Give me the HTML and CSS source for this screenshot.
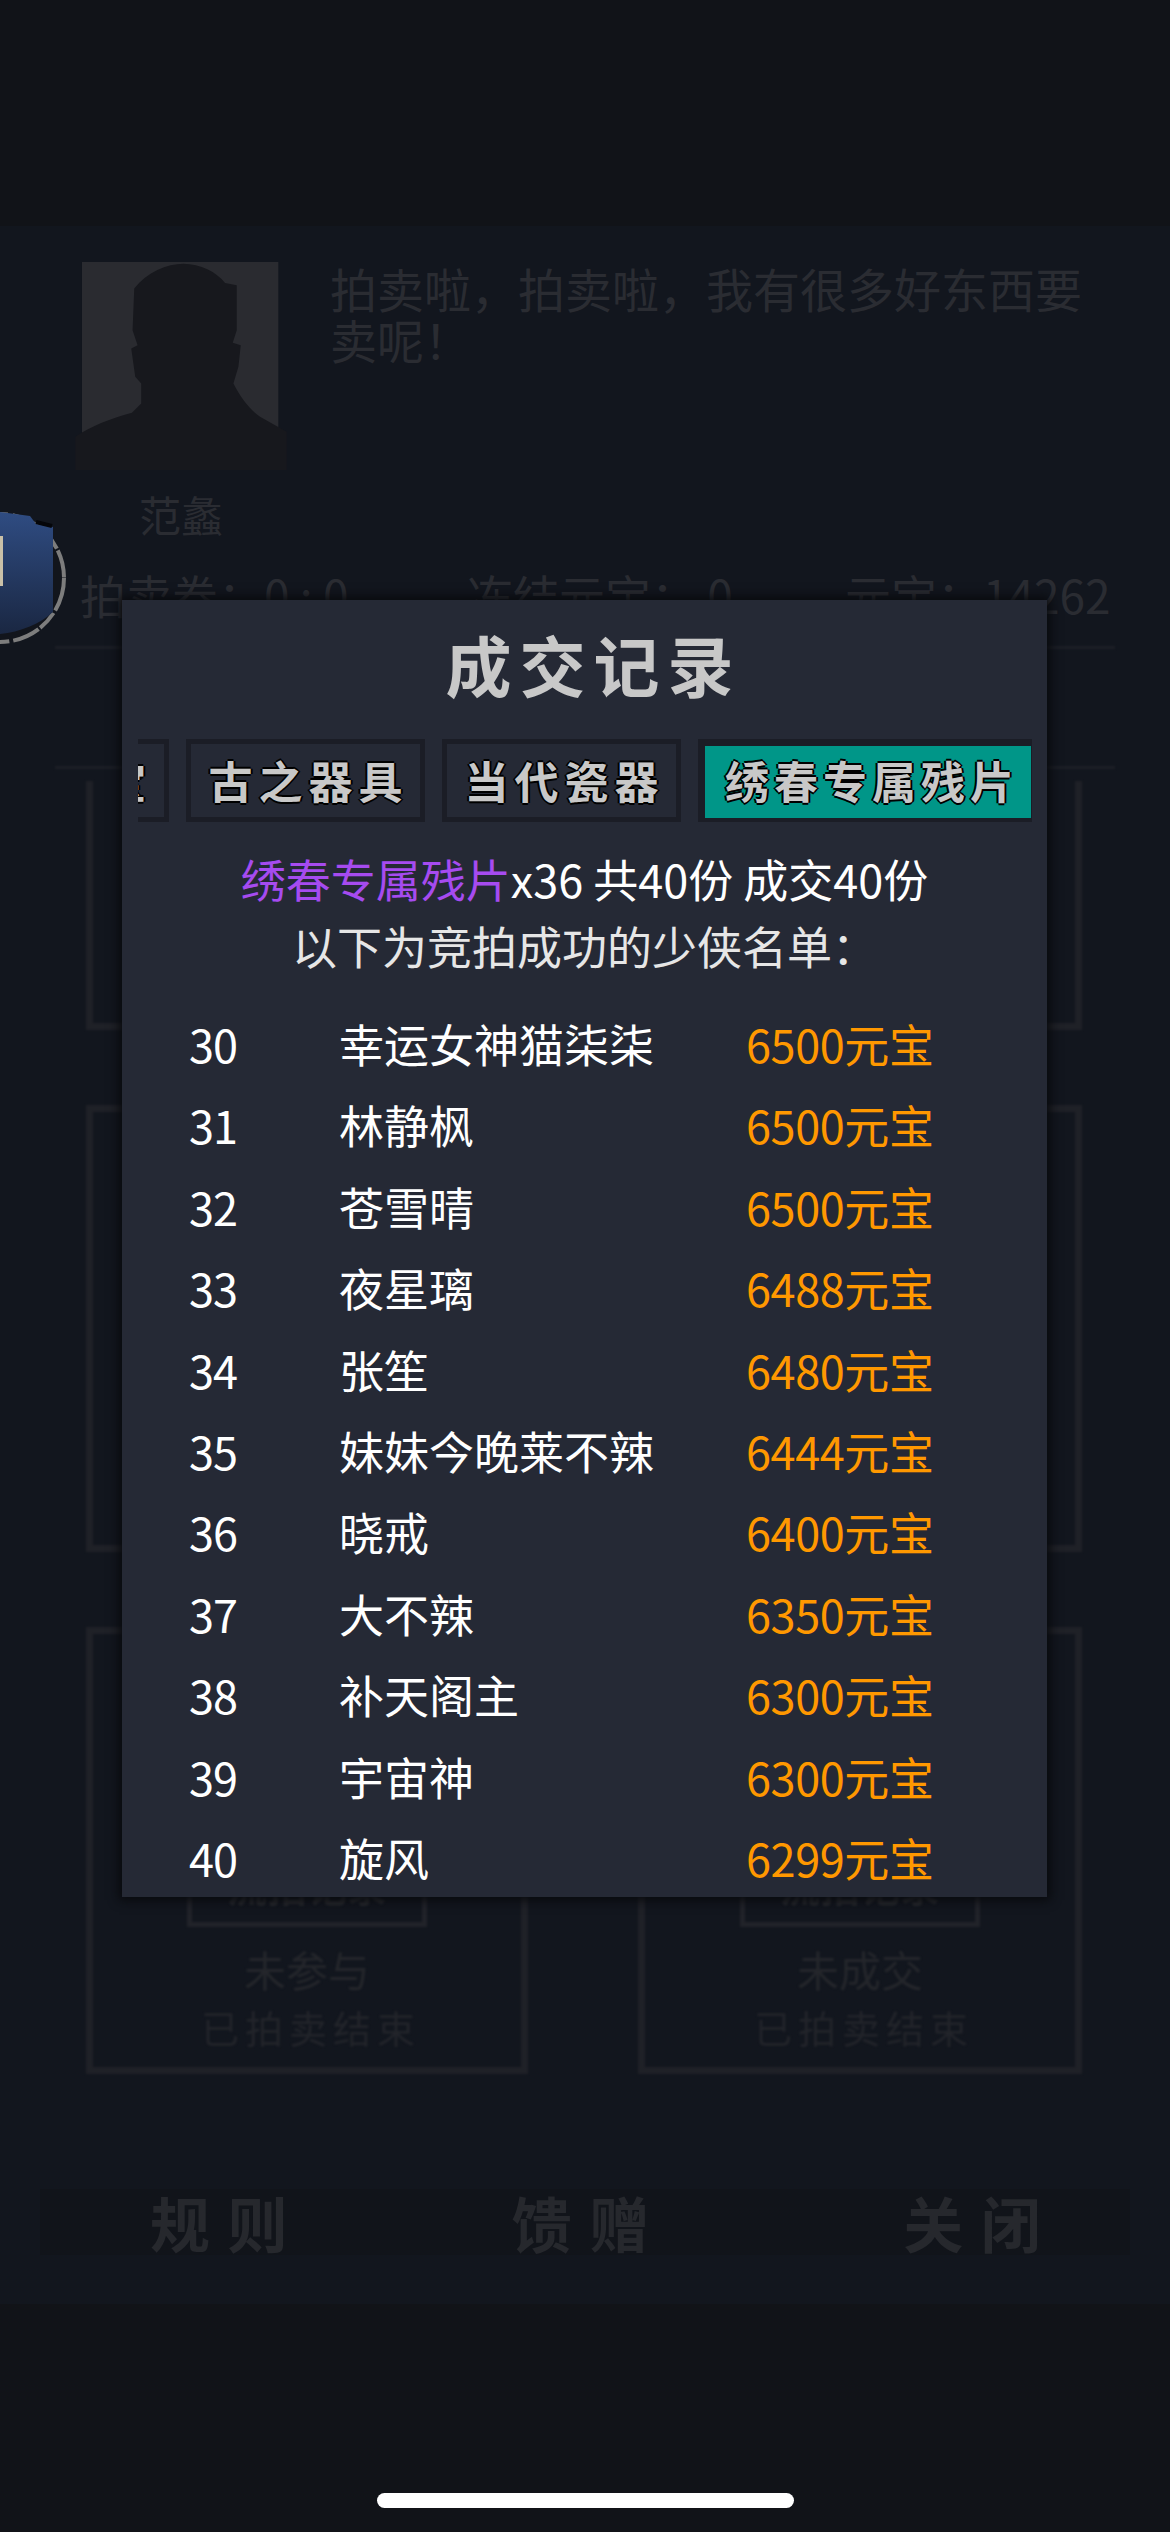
FILE: index.html
```html
<!DOCTYPE html>
<html lang="zh-CN">
<head>
    <meta charset="UTF-8">
    <meta name="viewport" content="width=device-width, initial-scale=1.0">
    <title>成交记录</title>
    <link rel="stylesheet" href="styles.css">
</head>
<body>
<div class="screen">
    <div class="top-space"></div>

    <div class="auction">
        <div class="npc">
            <div class="npc-left">
                <svg class="avatar" viewBox="45 95 635 625">
                    <rect x="65" y="95" width="590" height="520" fill="#2a2b30"/>
                    <path fill="#17181d" d="M45 620C90 590 150 565 215 548L243 520 243 460 225 440 213 355 232 345 217 300 222 175C260 125 320 100 370 100 420 100 470 125 495 158L530 165 530 300 518 338 542 345 535 410 520 460C540 500 570 540 600 560L680 605 680 720 45 720Z"/>
                </svg>
                <div class="npc-name">范蠡</div>
            </div>
            <div class="npc-say">拍卖啦，拍卖啦，我有很多好东西要卖呢！</div>
        </div>

        <div class="stats">
            <span class="stat-ticket">拍卖券：0 : 0</span>
            <span class="stat-frozen">冻结元宝： 0</span>
            <span class="stat-gold">元宝：14262</span>
        </div>
        <div class="divider"></div>
        <div class="tab-space"></div>
        <div class="divider"></div>

        <div class="cards">
            <div class="card card-cut"></div>
            <div class="card card-cut"></div>
            <div class="card"></div>
            <div class="card"></div>
            <div class="card">
                <div class="record-btn">流拍记录</div>
                <div class="card-state">未参与</div>
                <div class="card-end">已拍卖结束</div>
            </div>
            <div class="card">
                <div class="record-btn">流拍记录</div>
                <div class="card-state">未成交</div>
                <div class="card-end">已拍卖结束</div>
            </div>
        </div>

        <div class="footer">
            <span class="foot-btn foot-rule">规 则</span>
            <span class="foot-btn foot-gift">馈 赠</span>
            <span class="foot-btn foot-close">关 闭</span>
        </div>
    </div>

    <div class="bottom-space">
        <div class="home-bar"></div>
    </div>

    <!-- 左侧的圆形徽章 -->
    <svg class="badge" viewBox="0 0 72 140">
        <defs>
            <linearGradient id="shield" x1="0" y1="0" x2="0" y2="1">
                <stop offset="0" stop-color="#2f4c82"/>
                <stop offset="1" stop-color="#1a2742"/>
            </linearGradient>
        </defs>
        <circle cx="0" cy="70" r="64" fill="#12151c"/>
        <circle cx="0" cy="70" r="64" fill="none" stroke="#7d7d7d" stroke-width="4" stroke-dasharray="34 3 20 2 28 4 40 3 18 5"/>
        <path d="M0 4L30 8 36 16 53 19 53 104C40 116 20 124 0 126Z" fill="url(#shield)"/>
        <path d="M36 14L52 18" stroke="#05060a" stroke-width="4"/>
        <rect x="0" y="28" width="3" height="50" fill="#c9c0a8"/>
    </svg>

    <!-- 成交记录弹窗 -->
    <div class="modal">
        <h1 class="modal-title">成交记录</h1>
        <div class="tabs">
            <div class="tab">奇珍异宝</div>
            <div class="tab">古之器具</div>
            <div class="tab">当代瓷器</div>
            <div class="tab tab-active">绣春专属残片</div>
        </div>
        <div class="summary">
            <div><span class="item-name">绣春专属残片</span>x36 共40份 成交40份</div>
            <div class="summary-sub">以下为竞拍成功的少侠名单：</div>
        </div>
        <div class="rows">
            <div class="row"><span class="no">30</span><span>幸运女神猫柒柒</span><span class="price">6500元宝</span></div>
            <div class="row"><span class="no">31</span><span>林静枫</span><span class="price">6500元宝</span></div>
            <div class="row"><span class="no">32</span><span>苍雪晴</span><span class="price">6500元宝</span></div>
            <div class="row"><span class="no">33</span><span>夜星璃</span><span class="price">6488元宝</span></div>
            <div class="row"><span class="no">34</span><span>张笙</span><span class="price">6480元宝</span></div>
            <div class="row"><span class="no">35</span><span>妹妹今晚莱不辣</span><span class="price">6444元宝</span></div>
            <div class="row"><span class="no">36</span><span>晓戒</span><span class="price">6400元宝</span></div>
            <div class="row"><span class="no">37</span><span>大不辣</span><span class="price">6350元宝</span></div>
            <div class="row"><span class="no">38</span><span>补天阁主</span><span class="price">6300元宝</span></div>
            <div class="row"><span class="no">39</span><span>宇宙神</span><span class="price">6300元宝</span></div>
            <div class="row"><span class="no">40</span><span>旋风</span><span class="price">6299元宝</span></div>
        </div>
    </div>
</div>
</body>
</html>
```

FILE: styles.css
```css
body {
    margin: 0;
    background-color: #111318;
    font-family: "Noto Sans CJK SC", "Noto Sans", sans-serif;
}

.screen {
    position: relative;
    width: 1170px;
    height: 2532px;
    overflow: hidden;
    display: flex;
    flex-direction: column;
}

.top-space {
    height: 226px;
    flex: none;
}

/* 弹窗后面的拍卖页 */
.auction {
    height: 2078px;
    flex: none;
    background-color: #12161e;
    color: #2a2c32;
}

.npc {
    display: flex;
    height: 338px;
    padding: 36px 0 0 75px;
    box-sizing: border-box;
}

.npc-left {
    width: 212px;
    flex: none;
}

.avatar {
    display: block;
    width: 212px;
    height: 208px;
}

.npc-name {
    margin-top: 16px;
    font-size: 42px;
    line-height: 56px;
    text-align: center;
}

.npc-say {
    width: 770px;
    margin-left: 43px;
    font-size: 47px;
    line-height: 51px;
}

.stats {
    display: flex;
    height: 60px;
    font-size: 46px;
    line-height: 60px;
}

.stat-ticket {
    margin-left: 80px;
    width: 387px;
}

.stat-frozen {
    width: 378px;
}

.divider {
    height: 3px;
    margin: 22px 55px 0;
    background-color: #1c1f26;
    filter: blur(1px);
}

.tab-space {
    height: 95px;
}

.cards {
    display: grid;
    grid-template-columns: 442px 444px;
    column-gap: 110px;
    row-gap: 75px;
    align-content: start;
    height: 1319px;
    margin-top: -1px;
    padding: 13px 0 0 86px;
    box-sizing: border-box;
    overflow: hidden;
}

.card {
    height: 447px;
    border: 7px solid #1f2127;
    box-sizing: border-box;
    display: flex;
    flex-direction: column;
    align-items: center;
    justify-content: flex-end;
    padding-bottom: 10px;
    filter: blur(0.8px);
}

.card-cut {
    height: 249px;
    border-top: 0;
}

.record-btn {
    width: 240px;
    height: 70px;
    border: 5px solid #212329;
    border-top: 0;
    box-sizing: border-box;
    font-size: 40px;
    font-weight: 700;
    line-height: 56px;
    text-align: center;
    color: #26282d;
}

.card-state {
    margin-top: 12px;
    font-size: 42px;
    line-height: 60px;
    color: #24262b;
}

.card-end {
    margin-top: -2px;
    padding-left: 8px;
    font-size: 38px;
    line-height: 60px;
    letter-spacing: 6px;
    color: #22242a;
}

.footer {
    display: flex;
    height: 66px;
    margin: 102px 40px 0;
    background-color: #11141a;
}

.foot-btn {
    font-size: 60px;
    font-weight: 700;
    line-height: 66px;
    letter-spacing: 2px;
    color: #26282d;
    white-space: nowrap;
}

.foot-rule {
    margin-left: 110px;
}

.foot-gift {
    margin-left: 222px;
}

.foot-close {
    margin-left: 252px;
}

.bottom-space {
    flex: 1;
    display: flex;
    justify-content: center;
    padding-top: 189px;
}

.home-bar {
    width: 417px;
    height: 15px;
    border-radius: 8px;
    background-color: #fff;
}

/* 左边露出一半的徽章 */
.badge {
    position: absolute;
    left: 0;
    top: 508px;
    width: 72px;
    height: 140px;
}

/* 弹窗 */
.modal {
    position: absolute;
    left: 122px;
    top: 600px;
    width: 925px;
    height: 1297px;
    background-color: #252935;
    box-shadow: 0 0 10px 3px #08090c;
    overflow: hidden;
    color: #fff;
}

.modal-title {
    margin: 0;
    height: 139px;
    padding-left: 18px;
    font-size: 66px;
    font-weight: 700;
    line-height: 126px;
    letter-spacing: 8px;
    text-align: center;
    color: #c8c8c8;
}

.tabs {
    display: flex;
    justify-content: flex-end;
    gap: 17px;
    height: 83px;
    margin: 0 15px 0 16px;
    overflow: hidden;
}

.tab {
    flex: none;
    width: 239px;
    height: 83px;
    padding-left: 6px;
    border: 5px solid #1b1d26;
    box-sizing: border-box;
    font-size: 44px;
    font-weight: 700;
    line-height: 72px;
    letter-spacing: 6px;
    text-align: center;
    white-space: nowrap;
    color: #c8c8c8;
    text-shadow: -2px 0 #000, 2px 0 #000, 0 -2px #000, 0 2px #000;
}

.tab-active {
    width: 334px;
    padding-left: 8px;
    border-width: 7px 1px 4px 7px;
    background-color: #009688;
    letter-spacing: 5px;
    line-height: 68px;
}

.summary {
    margin-top: 23px;
    font-size: 45px;
    line-height: 67px;
    text-align: center;
}

.item-name {
    color: #a64bf0;
}

.summary-sub {
    color: #e6e6e6;
}

.rows {
    margin-top: 24px;
}

.row {
    display: grid;
    grid-template-columns: 182px 372px 1fr;
    column-gap: 35px;
    height: 81.4px;
    font-size: 45px;
    line-height: 81px;
    white-space: nowrap;
}

.no {
    text-align: center;
    letter-spacing: -1px;
}

.price {
    color: #ff9800;
    letter-spacing: -0.4px;
}
```
